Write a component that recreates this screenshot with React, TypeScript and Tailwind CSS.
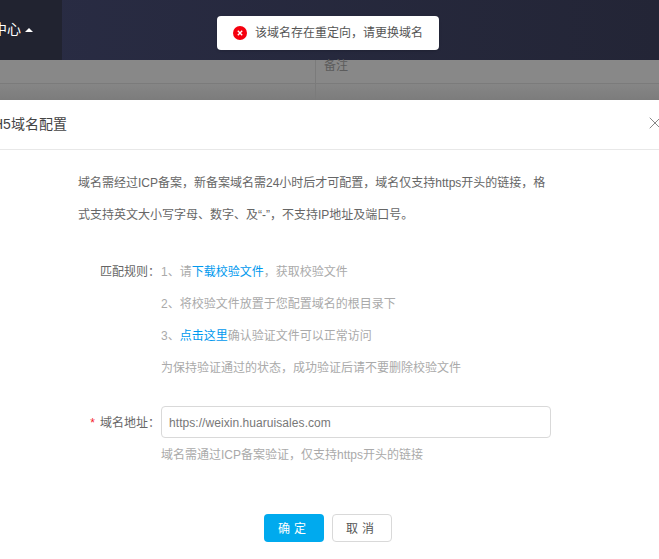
import { X } from 'lucide-react'

const font = "font-['Liberation_Sans','Noto_Sans_CJK_SC',sans-serif]"

export default function App() {
  return (
    <div className={`relative h-[559px] w-[659px] overflow-hidden bg-white ${font}`}>
      {/* top bar */}
      <div className="flex h-[60px] bg-gradient-to-r from-[#292c44] to-[#232536]">
        <div className="flex w-[62px] items-center justify-end gap-[4px] bg-[#212330] pb-[1px] pr-[38px] text-[14px] whitespace-nowrap text-white">
          <span>中心</span>
          <span className="mr-[-9px] h-0 w-0 border-x-[4px] border-b-[4px] border-x-transparent border-b-white" />
        </div>
      </div>

      {/* table behind the mask */}
      <div className="h-[40px] bg-[#888888]">
        <div className="flex h-[24px] border-b border-[#7b7b7b]">
          <div className="w-[316px] border-r border-[#7b7b7b]" />
          <div className="pl-[8px] text-[12px] leading-[12px] text-[#5c5c5c]">备注</div>
        </div>
        <div className="flex h-[16px] bg-gradient-to-b from-[#868686] to-[#7c7c7c]">
          <div className="w-[316px] border-r border-[#7b7b7b]" />
        </div>
      </div>

      {/* dialog */}
      <div className="ml-[-10px] w-[680px] bg-white">
        <div className="flex h-[50px] items-center justify-between border-b border-[#e8e8e8] pl-[3px] pr-[5px]">
          <h2 className="text-[14px] font-normal text-[#444444]">H5域名配置</h2>
          <X className="mb-[3px] h-[20px] w-[20px] text-[#888888]" strokeWidth={1.2} />
        </div>

        <div className="pl-[88px] pt-[17px] text-[12px]">
          <p className="w-[470px] leading-[32px] text-[#666666]">
            域名需经过ICP备案&#xFF0C;新备案域名需24小时后才可配置&#xFF0C;域名仅支持https开头的链接&#xFF0C;格式支持英文大小写字母、数字、及“-”&#xFF0C;不支持IP地址及端口号。
          </p>

          <div className="mt-[25px] flex leading-[32px]">
            <div className="w-[83px] pr-[1px] text-right text-[#666666]">匹配规则&#xFF1A;</div>
            <div className="text-[#aaaaaa]">
              <p>
                1、请<span className="text-[#0099ee]">下载校验文件</span>&#xFF0C;获取校验文件
              </p>
              <p>2、将校验文件放置于您配置域名的根目录下</p>
              <p>
                3、<span className="text-[#0099ee]">点击这里</span>确认验证文件可以正常访问
              </p>
              <p>为保持验证通过的状态&#xFF0C;成功验证后请不要删除校验文件</p>
            </div>
          </div>

          <div className="mt-[22px] flex">
            <label className="flex h-[32px] w-[83px] items-center justify-end pr-[1px] pt-[2px] text-[#666666]">
              <span className="mr-[5px] text-[#f5222d]">*</span>域名地址&#xFF1A;
            </label>
            <div>
              <input
                readOnly
                value="https://weixin.huaruisales.com"
                className="block h-[32px] w-[390px] rounded-[4px] border border-[#d9d9d9] px-[7px] pt-[2px] text-[12px] tracking-[0.06px] text-[#777777] outline-none"
              />
              <p className="mt-[9px] leading-[16px] text-[#aaaaaa]">域名需通过ICP备案验证&#xFF0C;仅支持https开头的链接</p>
            </div>
          </div>
        </div>

        <div className="mt-[51px] ml-[274px] flex gap-[8px] text-[12px]">
          <button className="h-[28px] w-[60px] rounded-[4px] bg-[#00aaee] pt-[1px] tracking-[4px] text-white">确定</button>
          <button className="h-[28px] w-[60px] rounded-[4px] border border-[#d9d9d9] bg-white pt-[1px] tracking-[4px] text-[#555555]">取消</button>
        </div>
      </div>

      {/* toast */}
      <div className="absolute left-[217px] top-[16px] flex h-[34px] w-[222px] items-center rounded-[4px] bg-white pl-[16px] shadow-sm">
        <svg viewBox="0 0 14 14" className="h-[14px] w-[14px]">
          <circle cx="7" cy="7" r="7" fill="#f5000e" />
          <path d="M4.8 4.8l4.4 4.4M9.2 4.8l-4.4 4.4" stroke="#fff" strokeWidth="1.4" />
        </svg>
        <span className="ml-[8px] text-[12px] whitespace-nowrap text-[#555555]">该域名存在重定向&#xFF0C;请更换域名</span>
      </div>
    </div>
  )
}
